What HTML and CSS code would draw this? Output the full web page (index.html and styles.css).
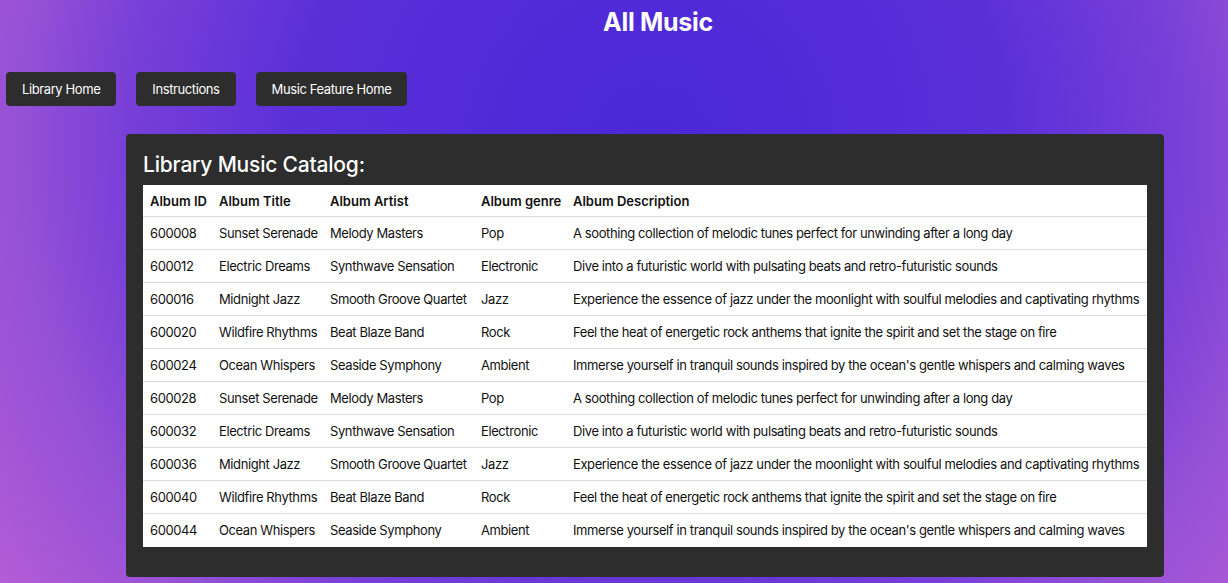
FILE: index.html
```html
<!DOCTYPE html>
<html>
<head>
<meta charset="utf-8">
<link rel="stylesheet" href="styles.css">
</head>
<body>
<h1 class="title">All Music</h1>
<nav class="nav">
  <button class="btn">Library Home</button>
  <button class="btn">Instructions</button>
  <button class="btn">Music Feature Home</button>
</nav>
<section class="card">
  <h2 class="card-title">Library Music Catalog:</h2>
  <table class="catalog">
    <colgroup>
      <col class="c1"><col class="c2"><col class="c3"><col class="c4"><col class="c5">
    </colgroup>
    <thead>
      <tr><th>Album ID</th><th>Album Title</th><th>Album Artist</th><th>Album genre</th><th>Album Description</th></tr>
    </thead>
    <tbody>
      <tr><td>600008</td><td>Sunset Serenade</td><td>Melody Masters</td><td>Pop</td><td>A soothing collection of melodic tunes perfect for unwinding after a long day</td></tr>
      <tr><td>600012</td><td>Electric Dreams</td><td>Synthwave Sensation</td><td>Electronic</td><td>Dive into a futuristic world with pulsating beats and retro-futuristic sounds</td></tr>
      <tr><td>600016</td><td>Midnight Jazz</td><td>Smooth Groove Quartet</td><td>Jazz</td><td>Experience the essence of jazz under the moonlight with soulful melodies and captivating rhythms</td></tr>
      <tr><td>600020</td><td>Wildfire Rhythms</td><td>Beat Blaze Band</td><td>Rock</td><td>Feel the heat of energetic rock anthems that ignite the spirit and set the stage on fire</td></tr>
      <tr><td>600024</td><td>Ocean Whispers</td><td>Seaside Symphony</td><td>Ambient</td><td>Immerse yourself in tranquil sounds inspired by the ocean's gentle whispers and calming waves</td></tr>
      <tr><td>600028</td><td>Sunset Serenade</td><td>Melody Masters</td><td>Pop</td><td>A soothing collection of melodic tunes perfect for unwinding after a long day</td></tr>
      <tr><td>600032</td><td>Electric Dreams</td><td>Synthwave Sensation</td><td>Electronic</td><td>Dive into a futuristic world with pulsating beats and retro-futuristic sounds</td></tr>
      <tr><td>600036</td><td>Midnight Jazz</td><td>Smooth Groove Quartet</td><td>Jazz</td><td>Experience the essence of jazz under the moonlight with soulful melodies and captivating rhythms</td></tr>
      <tr><td>600040</td><td>Wildfire Rhythms</td><td>Beat Blaze Band</td><td>Rock</td><td>Feel the heat of energetic rock anthems that ignite the spirit and set the stage on fire</td></tr>
      <tr><td>600044</td><td>Ocean Whispers</td><td>Seaside Symphony</td><td>Ambient</td><td>Immerse yourself in tranquil sounds inspired by the ocean's gentle whispers and calming waves</td></tr>
    </tbody>
  </table>
</section>
</body>
</html>
```

FILE: styles.css
```css
html, body {
  margin: 0;
  padding: 0;
}
body {
  min-height: 583px;
  font-family: Inter, "Helvetica Neue", Arial, sans-serif;
  background: radial-gradient(circle farthest-corner at 53% 25%, #4a27d8 0%, #5a2fd8 45%, #7a40d8 68%, #9450d6 80%, #b35cd6 100%);
  overflow: hidden;
}
.title {
  margin: 0;
  padding: 6px 0 0 88px;
  height: 72px;
  box-sizing: border-box;
  text-align: center;
  color: #fff;
  font-size: 25px;
  font-weight: 700;
  letter-spacing: -0.3px;
  line-height: 32px;
}
.nav {
  display: flex;
  gap: 20px;
  padding-left: 6px;
}
.btn {
  height: 34px;
  padding: 0 16px;
  border: none;
  border-radius: 4px;
  background: #2d2d2d;
  color: #fff;
  font-family: Inter, "Helvetica Neue", Arial, sans-serif;
  font-size: 13px;
  font-weight: 400;
  letter-spacing: -0.4px;
}
.card {
  margin: 28px 0 0 126px;
  width: 1038px;
  box-sizing: border-box;
  padding: 16px 17px 30px;
  background: #2d2d2d;
  border-radius: 4px;
}
.card-title {
  margin: 0 0 6px;
  color: #fff;
  font-size: 21px;
  font-weight: 500;
  line-height: 29px;
  letter-spacing: -0.2px;
}
.catalog {
  width: 1004px;
  table-layout: fixed;
  border-collapse: collapse;
  background: #fff;
  color: #111;
  font-size: 13px;
}
.c1 { width: 69px; }
.c2 { width: 111px; }
.c3 { width: 151px; }
.c4 { width: 92px; }
.c5 { width: 581px; }
.catalog th,
.catalog td {
  padding: 0 0 0 7px;
  height: 32px;
  text-align: left;
  white-space: nowrap;
  overflow: visible;
  border-bottom: 1px solid #dcdcdc;
}
.catalog td {
  letter-spacing: -0.4px;
}
.catalog th {
  height: 31px;
  font-weight: 600;
}
.catalog tbody tr:last-child td {
  border-bottom-color: #fff;
}
```
